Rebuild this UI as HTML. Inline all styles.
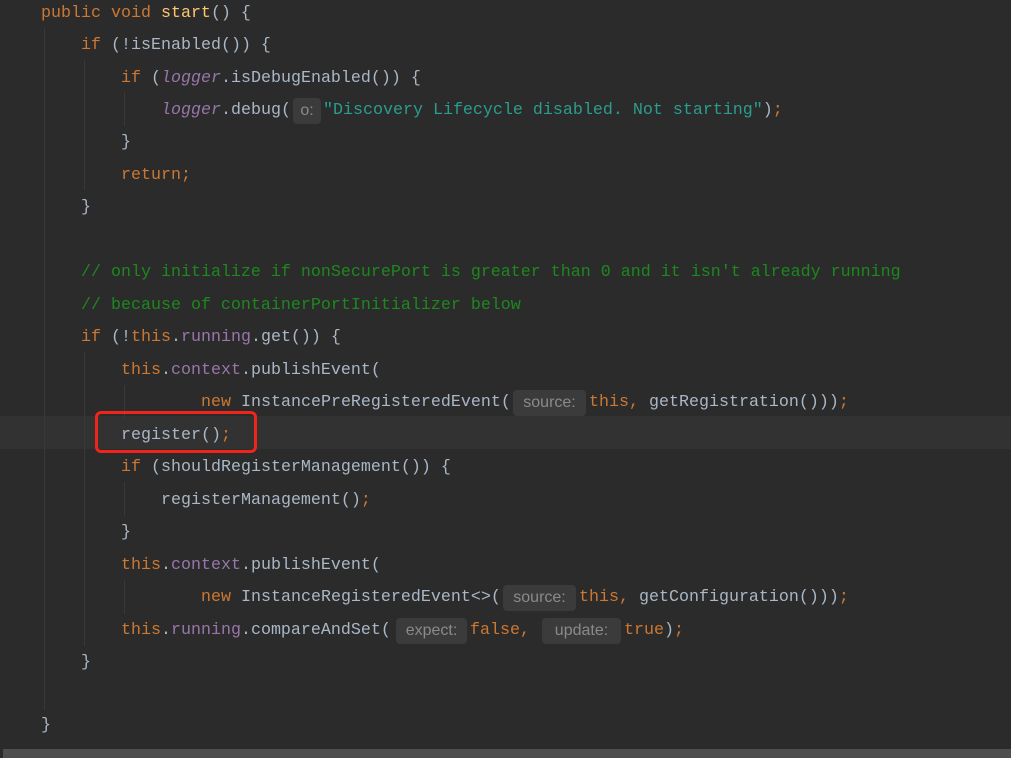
<!DOCTYPE html>
<html><head><meta charset="utf-8"><style>
html,body{margin:0;padding:0;}
body{width:1011px;height:758px;background:#2b2b2b;position:relative;overflow:hidden;font-family:"Liberation Mono",monospace;font-size:16.67px;color:#a9b7c6;}
.l{position:absolute;left:0;height:32px;line-height:32px;white-space:pre;margin-top:2px;}
.k{color:#cc7832}.f{color:#9876aa}.fi{color:#9876aa;font-style:italic}.m{color:#ffc66d}
.s{color:#2a9d8f}.c{color:#1d881d}
.h{position:absolute;height:26px;line-height:26px;background:#3b3b3b;color:#8a8a8a;border-radius:4px;font-family:"Liberation Sans",sans-serif;font-size:16px;text-align:center;margin-top:2px;}
.g{position:absolute;width:1px;background:#393939;}
</style></head><body>
<div style="position:absolute;left:0;top:416px;width:1011px;height:33px;background:#323232"></div>
<div class="g" style="left:44px;top:28px;height:682px"></div>
<div class="g" style="left:84px;top:60px;height:130px"></div>
<div class="g" style="left:84px;top:352px;height:294px"></div>
<div class="g" style="left:124px;top:92px;height:34px"></div>
<div class="g" style="left:124px;top:385px;height:34px"></div>
<div class="g" style="left:124px;top:482px;height:34px"></div>
<div class="g" style="left:124px;top:580px;height:34px"></div>

<div class="l" style="top:-4px;left:41px"><span class="k">public void </span><span class="m">start</span>() {</div>
<div class="l" style="top:28px;left:81px"><span class="k">if </span>(!isEnabled()) {</div>
<div class="l" style="top:61px;left:121px"><span class="k">if </span>(<span class="fi">logger</span>.isDebugEnabled()) {</div>
<div class="l" style="top:93px;left:161px"><span class="fi">logger</span>.debug(</div>
<div class="h" style="left:293px;top:96px;width:28px">o:</div>
<div class="l s" style="top:93px;left:323px">"Discovery Lifecycle disabled. Not starting"<span style="color:#a9b7c6">)</span><span class="k">;</span></div>
<div class="l" style="top:125px;left:121px">}</div>
<div class="l k" style="top:158px;left:121px">return;</div>
<div class="l" style="top:190px;left:81px">}</div>
<div class="l c" style="top:255px;left:81px">// only initialize if nonSecurePort is greater than 0 and it isn't already running</div>
<div class="l c" style="top:288px;left:81px">// because of containerPortInitializer below</div>
<div class="l" style="top:320px;left:81px"><span class="k">if </span>(!<span class="k">this</span>.<span class="f">running</span>.get()) {</div>
<div class="l" style="top:353px;left:121px"><span class="k">this</span>.<span class="f">context</span>.publishEvent(</div>
<div class="l" style="top:385px;left:201px"><span class="k">new </span>InstancePreRegisteredEvent(</div>
<div class="h" style="left:513px;top:388px;width:73px">source:</div>
<div class="l" style="top:385px;left:589px"><span class="k">this, </span>getRegistration()))<span class="k">;</span></div>
<div class="l" style="top:418px;left:121px">register()<span class="k">;</span></div>
<div class="l" style="top:450px;left:121px"><span class="k">if </span>(shouldRegisterManagement()) {</div>
<div class="l" style="top:483px;left:161px">registerManagement()<span class="k">;</span></div>
<div class="l" style="top:515px;left:121px">}</div>
<div class="l" style="top:548px;left:121px"><span class="k">this</span>.<span class="f">context</span>.publishEvent(</div>
<div class="l" style="top:580px;left:201px"><span class="k">new </span>InstanceRegisteredEvent&lt;&gt;(</div>
<div class="h" style="left:503px;top:583px;width:73px">source:</div>
<div class="l" style="top:580px;left:579px"><span class="k">this, </span>getConfiguration()))<span class="k">;</span></div>
<div class="l" style="top:613px;left:121px"><span class="k">this</span>.<span class="f">running</span>.compareAndSet(</div>
<div class="h" style="left:396px;top:616px;width:71px">expect:</div>
<div class="l k" style="top:613px;left:470px">false,</div>
<div class="h" style="left:542px;top:616px;width:79px">update:</div>
<div class="l" style="top:613px;left:624px"><span class="k">true</span>)<span class="k">;</span></div>
<div class="l" style="top:645px;left:81px">}</div>
<div class="l" style="top:708px;left:41px">}</div>

<div style="position:absolute;left:95px;top:411px;width:156px;height:36px;border:3px solid #f0241a;border-radius:6px"></div>
<div style="position:absolute;left:3px;top:749px;width:1008px;height:9px;background:#4e4e4e"></div>
</body></html>
